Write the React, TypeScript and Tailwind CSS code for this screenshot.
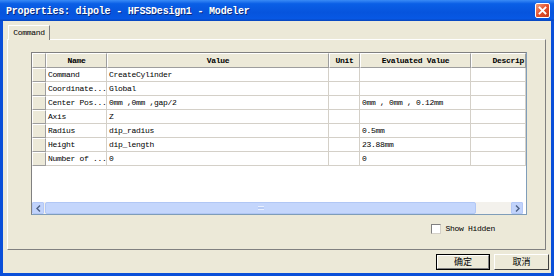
import React from 'react'

const mono = "font-['Liberation_Mono','Noto_Sans_CJK_SC',monospace]"

const rows: [string, string, string, string][] = [
  ['Command', 'CreateCylinder', '', ''],
  ['Coordinate...', 'Global', '', ''],
  ['Center Pos...', '0mm ,0mm ,gap/2', '', '0mm , 0mm , 0.12mm'],
  ['Axis', 'Z', '', ''],
  ['Radius', 'dip_radius', '', '0.5mm'],
  ['Height', 'dip_length', '', '23.88mm'],
  ['Number of ...', '0', '', '0'],
]

const HeadCell: React.FC<{ w: string; right?: boolean; children?: React.ReactNode }> = ({ w, right, children }) => (
  <div
    className={`${w} shrink-0 h-full flex items-center ${right ? 'justify-end pr-[1px]' : 'justify-center'} bg-[#ECE9D8] border-t border-l border-t-white border-l-white border-r border-b border-r-[#9D9D9D] border-b-[#9D9D9D] font-bold text-[8px] tracking-[-0.3px] text-black overflow-hidden whitespace-nowrap`}
  >
    {children}
  </div>
)

const Cell: React.FC<{ w: string; children?: React.ReactNode }> = ({ w, children }) => (
  <div className={`${w} shrink-0 h-full flex items-center pl-[2px] bg-white border-r border-b border-[#D4D0C8] text-[8px] tracking-[-0.3px] text-black overflow-hidden whitespace-nowrap`}>
    {children}
  </div>
)

export default function App() {
  return (
    <div className={`w-[554px] h-[276px] flex flex-col overflow-hidden bg-[#0A4FD9] ${mono}`}>
      {/* title bar */}
      <div className="h-[21px] shrink-0 flex items-center justify-between pl-[6px] pr-[4px] bg-[linear-gradient(to_bottom,#3A8BF6_0%,#0A5FE6_18%,#0654DD_60%,#0758E4_88%,#0845BC_100%)]">
        <span className="text-white font-bold text-[10px] tracking-[-0.2px] [text-shadow:1px_1px_0_#0A2A7A] whitespace-nowrap pt-[1px]">
          Properties: dipole - HFSSDesign1 - Modeler
        </span>
        <div className="w-[15px] h-[15px] rounded-[2px] border border-white bg-[linear-gradient(135deg,#F0A080_0%,#E4502C_50%,#C83A18_100%)] flex items-center justify-center">
          <svg width="9" height="9" viewBox="0 0 9 9">
            <path d="M1.5 1.5 L7.5 7.5 M7.5 1.5 L1.5 7.5" stroke="white" strokeWidth="1.8" strokeLinecap="square" />
          </svg>
        </div>
      </div>

      {/* body */}
      <div className="flex-1 mx-[3px] mb-[3px] bg-[#ECE9D8] flex flex-col">
        {/* tab strip */}
        <div className="h-[18px] pt-[3px] pl-[5px] flex items-end">
          <div className="h-[15px] w-[42px] flex items-center justify-center border-t border-l border-t-white border-l-white border-r border-r-[#808080] text-[8px] tracking-[-0.3px] text-black relative z-10 -mb-[1px] bg-[#ECE9D8]">
            Command
          </div>
        </div>

        {/* tab panel */}
        <div className="ml-[4px] mr-[5px] h-[211px] border-t border-l border-t-white border-l-white border-r border-b border-r-[#808080] border-b-[#808080] flex flex-col pl-[23px] pr-[18px] pt-[12px]">
          {/* grid */}
          <div className="h-[163px] border border-[#7F9DB9] border-l-[#808080] border-t-[#808080] bg-white flex flex-col">
            <div className="h-[15px] flex">
              <HeadCell w="w-[14px]" />
              <HeadCell w="w-[61px]">Name</HeadCell>
              <HeadCell w="w-[222px]">Value</HeadCell>
              <HeadCell w="w-[31px]">Unit</HeadCell>
              <HeadCell w="w-[111px]">Evaluated Value</HeadCell>
              <HeadCell w="flex-1" right>Descrip</HeadCell>
            </div>
            {rows.map((r, i) => (
              <div key={i} className="h-[14px] flex">
                <div className="w-[14px] shrink-0 h-full bg-[#ECE9D8] border-t border-l border-t-white border-l-white border-r border-b border-r-[#9D9D9D] border-b-[#9D9D9D]" />
                <Cell w="w-[61px]">{r[0]}</Cell>
                <Cell w="w-[222px]">{r[1]}</Cell>
                <Cell w="w-[31px]">{r[2]}</Cell>
                <Cell w="w-[111px]">{r[3]}</Cell>
                <Cell w="flex-1" />
              </div>
            ))}
            <div className="flex-1" />
            {/* horizontal scrollbar */}
            <div className="h-[12px] flex items-stretch mr-[3px]">
              <div className="w-[12px] shrink-0 bg-[#C1D3FB] border border-[#B4C8F6] rounded-[1px] flex items-center justify-center">
                <svg width="5" height="7" viewBox="0 0 5 7">
                  <path d="M4 0.5 L1 3.5 L4 6.5" stroke="#4D6185" strokeWidth="1.4" fill="none" />
                </svg>
              </div>
              <div className="flex-1 flex bg-[#F3F1EC] pl-[1px]">
                <div className="w-[431px] bg-[#C4D6FC] border border-[#B1C7F5] rounded-[2px] flex items-center justify-center">
                  <div className="w-[6px] h-[4px] border-y border-[#E8EFFE] bg-[#B6CBF6]" />
                </div>
              </div>
              <div className="w-[12px] shrink-0 bg-[#C1D3FB] border border-[#B4C8F6] rounded-[1px] flex items-center justify-center">
                <svg width="5" height="7" viewBox="0 0 5 7">
                  <path d="M1 0.5 L4 3.5 L1 6.5" stroke="#4D6185" strokeWidth="1.4" fill="none" />
                </svg>
              </div>
            </div>
          </div>

          {/* show hidden */}
          <div className="h-[18px] flex items-center justify-end pr-[32px] mt-[5px]">
            <div className="w-[10px] h-[10px] bg-white border border-t-[#808080] border-l-[#808080] border-r-[#D4D0C8] border-b-[#D4D0C8] mr-[4px]" />
            <span className="text-[8px] tracking-[-0.3px] text-black">Show Hidden</span>
          </div>
        </div>

        {/* buttons */}
        <div className="flex-1 flex items-start justify-end gap-[4px] pr-[2px] pt-[4px]">
          <div className="w-[54px] h-[16px] border border-black flex">
            <div className="flex-1 flex items-center justify-center bg-[#ECE9D8] border-t border-l border-t-white border-l-white border-r border-b border-r-[#808080] border-b-[#808080] text-[9px] font-['Noto_Sans_CJK_SC',sans-serif] text-black">
              确定
            </div>
          </div>
          <div className="w-[55px] h-[16px] flex items-center justify-center bg-[#ECE9D8] border-t border-l border-t-white border-l-white border-r border-b border-r-[#404040] border-b-[#404040] text-[9px] font-['Noto_Sans_CJK_SC',sans-serif] text-black">
            取消
          </div>
        </div>
      </div>
    </div>
  )
}
